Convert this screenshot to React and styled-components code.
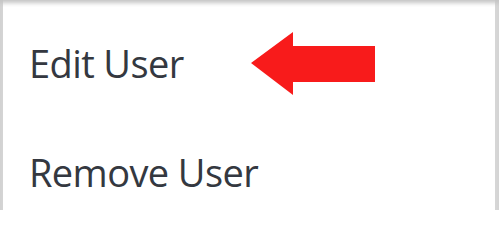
import React from "react";
import styled, { createGlobalStyle } from "styled-components";

const Global = createGlobalStyle`
  html, body {
    margin: 0;
    padding: 0;
    background: #ffffff;
  }
`;

const App = () => {
  return (
    <>
      <Global />
      <Menu>
        <Item>
          <Label>Edit User</Label>
          <Arrow width="126" height="64" viewBox="0 0 126 64">
            <polygon points="0,31 42,0 42,14 124,14 124,50 42,50 42,63" />
          </Arrow>
        </Item>
        <Item>
          <Label>Remove User</Label>
        </Item>
      </Menu>
    </>
  );
};

export default App;

const Menu = styled.div`
  width: 499px;
  height: 210px;
  box-sizing: border-box;
  background: #ffffff;
  display: flex;
  flex-direction: column;
  padding: 32px 0 0 29px;
  gap: 47px;
  box-shadow: inset 0 5px 4px -2px #c4c4c4, inset 3px 0 0 #d4d4d4,
    inset -4px 0 0 #d6d6d6;
`;

const Item = styled.div`
  display: flex;
  align-items: center;
  height: 62px;
`;

const Label = styled.span`
  font-family: "Open Sans", "Noto Sans", sans-serif;
  font-size: 38px;
  color: #343840;
  letter-spacing: -0.6px;
`;

const Arrow = styled.svg`
  margin-left: 67px;
  margin-top: 2px;
  fill: #f81b1b;
`;
